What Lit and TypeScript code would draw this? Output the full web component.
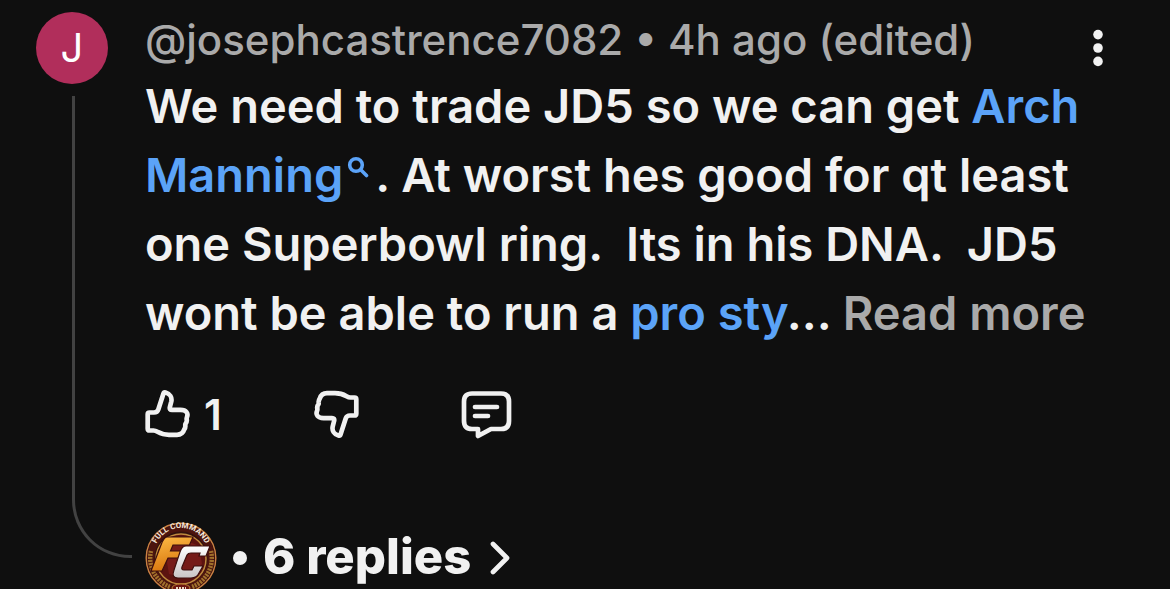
import { LitElement, html, css, svg } from "lit";
import { customElement, property } from "lit/decorators.js";

const thumb = svg`<path d="M4.500 22.500H9C11.500 22.500 12.600 21.700 13.300 19.500L18.300 4C18.700 2.700 19.400 2.200 20.500 2.500C25 3.800 27.200 7.500 26.300 11.500L24.900 17C24.400 19 25.200 19.900 27 19.900H35.500C41.500 19.900 43.400 23.500 42 27C41.500 28.300 41.500 28.800 41.700 29.600C42 31 41.600 32.300 40.700 33.400C40.200 34.200 40.200 34.800 40.300 35.400C40.500 37 40 38.300 39.300 39.300C38 43.500 36 44.800 32 44.800H24C19 44.800 15.500 43.500 12.500 41.800C11 40.900 10 40.500 8.500 40.500H4.500C3 40.500 2.700 40.200 2.700 38.700V24.300C2.700 22.800 3 22.500 4.500 22.500Z"/>`;

@customElement("channel-badge")
export class ChannelBadge extends LitElement {
  static styles = css`
    :host {
      display: block;
      width: 72px;
      height: 72px;
    }
    svg {
      display: block;
      width: 100%;
      height: 100%;
    }
    .ring-text {
      font: 700 8px "Roboto", sans-serif;
      fill: #f4e9dc;
    }
  `;

  render() {
    return html`<svg viewBox="0 0 72 72" role="img" aria-label="Full Command">
      <defs>
        <linearGradient id="gold" x1="0" y1="0" x2="0.3" y2="1">
          <stop offset="0" stop-color="#ffbd48" />
          <stop offset="1" stop-color="#d9780f" />
        </linearGradient>
        <linearGradient id="silver" x1="0" y1="0" x2="0" y2="1">
          <stop offset="0" stop-color="#ffffff" />
          <stop offset="1" stop-color="#c9c5c5" />
        </linearGradient>
        <path id="arc" d="M9 33A27 27 0 0 1 63 33" />
      </defs>
      <circle cx="36" cy="36" r="35.500" fill="#32110d" />
      <circle cx="36" cy="36" r="34.800" fill="none" stroke="#c98043" stroke-width="1.400" />
      <circle cx="36" cy="36" r="30" fill="none" stroke="#4c140e" stroke-width="7" />
      <path d="M6 29A31 31 0 0 0 25 65M66 29A31 31 0 0 1 47 65" fill="none" stroke="#a0712c" stroke-width="4.500" stroke-dasharray="2 1" />
      <circle cx="36" cy="37" r="25" fill="#5c1310" stroke="#c08a3e" stroke-width="1.500" />
      <path d="M19 23L33 15L54 24L57 42L43 57L24 52Z" fill="#751b18" />
      <text class="ring-text"><textPath href="#arc" startOffset="50%" text-anchor="middle">FULL COMMAND</textPath></text>
      <path d="M22 15H48L44.500 23H28L25.500 29H39L36 36H23L17 49H6L16 23Q19 15 22 15Z" fill="url(#gold)" stroke="#3d0f0d" stroke-width="1.200" />
      <path d="M41 24H65L61 34H54L55 31H46Q43 31 42 33L37 45Q36 48 39 48H47L49 44H58L54 51Q52 56 46 56H33Q26 56 29 48L35 30Q37 24 41 24Z" fill="url(#silver)" stroke="#3d0f0d" stroke-width="1.200" />
      <ellipse cx="36" cy="66" rx="9" ry="4" fill="#6d1712" stroke="#c08437" />
      <path d="M31 66H41" stroke="#ead8c2" stroke-width="2" stroke-dasharray="2 1" />
    </svg>`;
  }
}

@customElement("user-comment")
export class UserComment extends LitElement {
  @property() author = "";
  @property() time = "";
  @property({ type: Number }) likes = 0;
  @property({ type: Number }) replies = 0;

  static styles = css`
    :host {
      display: block;
    }
    .comment {
      display: grid;
      grid-template-columns: 109px minmax(0, 1fr);
      padding: 12px 36px 0;
    }
    .rail {
      display: flex;
      flex-direction: column;
      gap: 12px;
    }
    .avatar {
      display: grid;
      place-items: center;
      width: 72px;
      height: 72px;
      border-radius: 50%;
      background: #b12e5b;
      color: #fff;
      font-size: 40px;
      line-height: 72px;
      text-decoration: none;
    }
    .thread {
      flex: 1;
      width: 60px;
      box-sizing: border-box;
      margin: 0 0 36px 36px;
      border: solid #424242;
      border-width: 0 0 3px 3px;
      border-bottom-left-radius: 58px;
    }
    header {
      display: flex;
      justify-content: space-between;
      height: 59px;
    }
    .meta {
      font-size: 42px;
      font-weight: 500;
      line-height: 55px;
      color: #aaa;
      white-space: nowrap;
    }
    a {
      color: inherit;
      text-decoration: none;
    }
    button {
      display: flex;
      align-items: center;
      margin: 0;
      padding: 0;
      border: 0;
      background: none;
      color: inherit;
      font: inherit;
      cursor: pointer;
    }
    svg {
      display: block;
      fill: none;
      stroke: currentColor;
      stroke-width: 4.700;
      stroke-linejoin: round;
      stroke-linecap: round;
    }
    .menu {
      width: 72px;
      height: 72px;
      justify-content: center;
    }
    .menu svg {
      fill: currentColor;
      stroke: none;
    }
    .body {
      margin: 0;
      font-size: 47px;
      font-weight: 600;
      line-height: 69px;
      white-space: pre;
    }
    .body a {
      color: #5ba3f8;
    }
    .body svg {
      display: inline-block;
      margin: 0 6px 14px 4px;
      stroke-width: 3.600;
    }
    .more {
      display: inline;
      color: #aaa;
    }
    .actions {
      display: flex;
      margin-top: 41px;
      height: 52px;
      font-size: 42px;
      font-weight: 600;
    }
    .like {
      width: 169px;
      gap: 14px;
    }
    .dislike {
      width: 146px;
    }
    .down {
      transform: rotate(180deg);
    }
    .replies {
      margin-top: 82px;
      gap: 16px;
      font-size: 49px;
      font-weight: 800;
      line-height: 68px;
    }
    .count {
      padding-bottom: 2px;
    }
    .dot {
      width: 14px;
      height: 14px;
      border-radius: 50%;
      background: currentColor;
    }
  `;

  render() {
    return html`<article class="comment">
      <div class="rail">
        <a class="avatar" href="#channel" aria-label=${this.author}>J</a>
        <div class="thread"></div>
      </div>
      <div>
        <header>
          <div class="meta"><a href="#channel">${this.author}</a> • ${this.time}</div>
          <button class="menu" aria-label="More actions">
            <svg width="12" height="38" viewBox="0 0 12 38"><circle cx="6" cy="5.600" r="4.800" /><circle cx="6" cy="19" r="4.800" /><circle cx="6" cy="32.400" r="4.800" /></svg>
          </button>
        </header>
        <p class="body">We need to trade JD5 so we can get <a href="#arch">Arch<br>Manning<svg width="22" height="22" viewBox="0 0 22 22" aria-hidden="true"><circle cx="9" cy="9" r="6.300" /><path d="M14 14L19.500 19.500" /></svg></a>. At worst hes good for qt least<br>one Superbowl ring.  Its in his DNA.  JD5<br>wont be able to run a <a href="#pro">pro sty</a>... <button class="more">Read more</button></p>
        <div class="actions">
          <button class="like" aria-label="Like"><svg width="45" height="48" viewBox="0 0 45 48">${thumb}</svg><span>${this.likes}</span></button>
          <button class="dislike" aria-label="Dislike"><svg class="down" width="45" height="48" viewBox="0 0 45 48">${thumb}</svg></button>
          <button aria-label="Reply"><svg width="52" height="50" viewBox="0 0 52 50"><path d="M12 4.500H41Q49 4.500 49 12.500V32Q49 40 41 40H31L18 47V40H12Q4 40 4 32V12.500Q4 4.500 12 4.500ZM15 18H37M15 27H28" /></svg></button>
        </div>
        <button class="replies"><channel-badge></channel-badge><span class="dot"></span><span class="count">${this.replies} replies</span><svg width="24" height="36" viewBox="0 0 24 36"><path d="M6 4L20 18L6 32" /></svg></button>
      </div>
    </article>`;
  }
}

@customElement("app-root")
export class AppRoot extends LitElement {
  static styles = css`
    :host {
      display: block;
      height: 100vh;
      overflow: hidden;
      background: #0f0f0f;
      color: #f1f1f1;
      font-family: Inter, "Liberation Sans", sans-serif;
    }
  `;

  render() {
    return html`<user-comment author="@josephcastrence7082" time="4h ago (edited)" .likes=${1} .replies=${6}></user-comment>`;
  }
}
